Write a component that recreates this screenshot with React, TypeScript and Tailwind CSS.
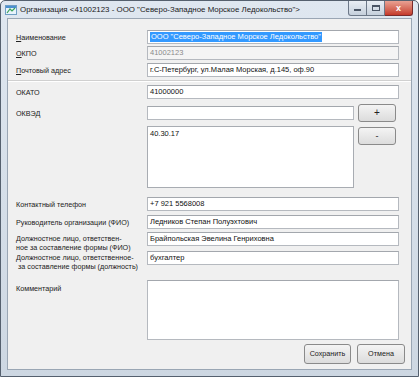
import React from 'react'

const font = "font-['Liberation_Sans',Arial,sans-serif]"

function Field({ value, disabled, selected }: { value?: string; disabled?: boolean; selected?: boolean }) {
  return (
    <div
      className={`h-[14px] w-[252px] shrink-0 border border-[#b5b9bf] border-t-[#a3a7ad] flex items-center px-[2px] text-[7.5px] leading-none overflow-hidden whitespace-nowrap ${
        disabled ? 'bg-[#f4f4f4] text-[#8a8a8a]' : 'bg-white text-[#111]'
      }`}
    >
      {selected ? <span className="bg-[#3399ff] text-white px-[1px] py-[1px]">{value}</span> : value}
    </div>
  )
}

function Label({ children, className = '' }: { children?: React.ReactNode; className?: string }) {
  return (
    <div className={`w-[131px] shrink-0 text-[7.2px] leading-[9px] text-[#222] whitespace-nowrap ${className}`}>
      {children}
    </div>
  )
}

function Row({ label, children, className = '' }: { label: React.ReactNode; children: React.ReactNode; className?: string }) {
  return (
    <div className={`flex items-center h-[14px] shrink-0 ${className}`}>
      <Label>{label}</Label>
      {children}
    </div>
  )
}

function WinButton({ children, className = '' }: { children: React.ReactNode; className?: string }) {
  return (
    <button
      className={`shrink-0 p-0 rounded-[3px] border border-[#8a8a8a] bg-gradient-to-b from-[#f4f4f4] to-[#dcdcdc] text-[7.2px] leading-none text-[#222] flex items-center justify-center ${className}`}
    >
      {children}
    </button>
  )
}

export default function App() {
  return (
    <div className={`w-[419px] h-[377px] ${font} bg-white`}>
      <div className="w-[419px] h-[377px] border border-[#55606e] rounded-t-[5px] bg-gradient-to-b from-[#dfe7f0] to-[#cdd7e2] flex flex-col">
        {/* title bar */}
        <div className="h-[17px] flex items-start shrink-0">
          <svg width="12" height="10" viewBox="0 0 12 10" className="ml-[4px] mt-[4px] shrink-0">
            <rect x="0.5" y="0.5" width="11" height="9" fill="#e8f3fb" stroke="#6f9fc4" />
            <rect x="1" y="1" width="10" height="2" fill="#4b8fd0" />
            <path d="M2 8 L5 4 L7 6 L10 3" stroke="#3aa35a" strokeWidth="1.2" fill="none" />
          </svg>
          <div className="ml-[3px] mt-[4px] text-[7.9px] leading-[10px] text-[#1a1a1a] whitespace-nowrap">
            Организация &lt;41002123 - ООО "Северо-Западное Морское Ледокольство"&gt;
          </div>
          <div className="ml-auto mr-[5px] flex">
            <div className="w-[19px] h-[15px] border border-[#6c7888] border-t-0 rounded-bl-[3px] bg-gradient-to-b from-[#e9eef4] to-[#c5d0dc] flex items-end justify-center pb-[4px]">
              <div className="w-[7px] h-[2px] bg-[#4a5565]" />
            </div>
            <div className="w-[18px] h-[15px] border-b border-r border-[#6c7888] bg-gradient-to-b from-[#e9eef4] to-[#c5d0dc] flex items-center justify-center">
              <div className="w-[8px] h-[6px] border border-[#4a5565] border-t-2" />
            </div>
            <div className="w-[28px] h-[15px] border border-[#7a2b2b] border-t-0 border-l-0 rounded-br-[3px] bg-gradient-to-b from-[#e8a193] to-[#c4392b] flex items-center justify-center text-white text-[9px] font-bold leading-none">
              x
            </div>
          </div>
        </div>

        {/* client area */}
        <div className="mx-[6px] mb-[6px] flex-1 bg-[#f0f0f0] border border-[#9aa6b4] flex flex-col pl-[8px] pt-[11px]">
          <Row label={<><u>Н</u>аименование</>}>
            <Field value={'ООО "Северо-Западное Морское Ледокольство"'} selected />
          </Row>
          <Row label={<><u>О</u>КПО</>} className="mt-[2px]">
            <Field value="41002123" disabled />
          </Row>
          <Row label={<><u>П</u>очтовый адрес</>} className="mt-[3px]">
            <Field value="г.С-Петербург, ул.Малая Морская, д.145, оф.90" />
          </Row>
          <div className="h-px bg-[#d0d0d0] border-b border-white -ml-[8px] mt-[3px] box-content shrink-0" />
          <Row label="ОКАТО" className="mt-[3px]">
            <Field value="41000000" />
          </Row>
          <div className="flex items-center mt-[5px] h-[18px] shrink-0">
            <Label>ОКВЭД</Label>
            <div className="h-[14px] w-[207px] shrink-0 bg-white border border-[#b5b9bf] border-t-[#a3a7ad]" />
            <WinButton className="ml-[4px] h-[18px] w-[38px] text-[10px]">+</WinButton>
          </div>
          <div className="flex items-start mt-[4px] shrink-0">
            <Label />
            <div className="h-[62px] w-[207px] shrink-0 bg-white border border-[#a8acb2] text-[7.5px] leading-[9px] px-[2px] pt-[2px] text-[#111]">
              40.30.17
            </div>
            <WinButton className="ml-[4px] mt-[1px] h-[18px] w-[38px] text-[9px]">-</WinButton>
          </div>
          <Row label="Контактный телефон" className="mt-[9px]">
            <Field value="+7 921 5568008" />
          </Row>
          <Row label="Руководитель организации (ФИО)" className="mt-[4px]">
            <Field value="Ледников Степан Полуэхтович" />
          </Row>
          <div className="flex items-start h-[14px] mt-[3px] shrink-0">
            <Label className="pt-[2px]">
              Должностное лицо, ответствен-
              <br />
              ное за составление формы (ФИО)
            </Label>
            <Field value="Брайпольская Эвелина Генриховна" />
          </div>
          <div className="flex items-start h-[14px] mt-[5px] shrink-0">
            <Label className="pt-[2px]">
              Должностное лицо, ответственное-
              <br />
              &nbsp;за составление формы (должность)
            </Label>
            <Field value="бухгалтер" />
          </div>
          <div className="flex items-start mt-[15px] shrink-0">
            <Label className="pt-[4px]">Комментарий</Label>
            <div className="h-[60px] w-[252px] shrink-0 bg-white border border-[#b5b9bf] border-t-[#a3a7ad]" />
          </div>
          <div className="flex justify-end mt-[4px] mr-[6px] gap-[6px] shrink-0">
            <WinButton className="h-[20px] w-[47px]">Сохранить</WinButton>
            <WinButton className="h-[20px] w-[48px]">Отмена</WinButton>
          </div>
        </div>
      </div>
    </div>
  )
}
